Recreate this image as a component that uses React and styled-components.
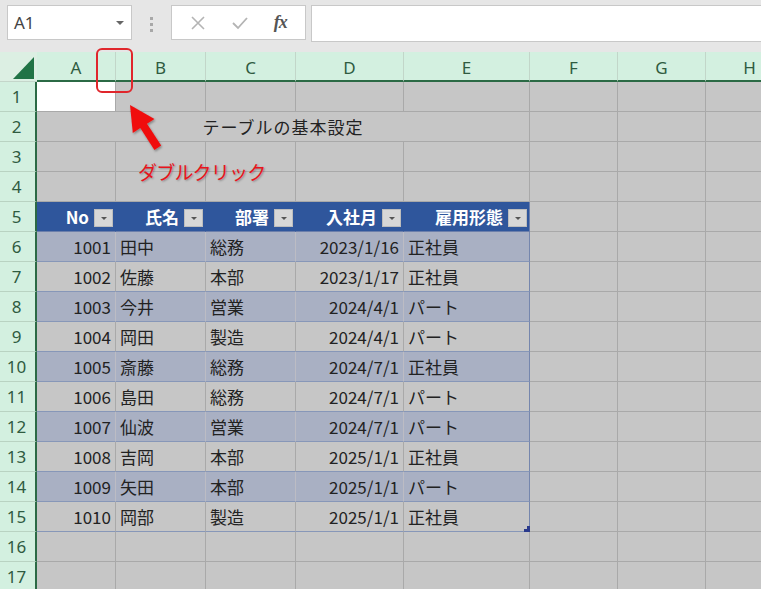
import styled, { createGlobalStyle } from 'styled-components';

const GlobalStyle = createGlobalStyle`
  html, body {
    margin: 0;
    padding: 0;
    background: #e6e6e6;
    overflow: hidden;
  }
`;

const jp = `"Noto Sans CJK JP", "Noto Sans", sans-serif`;

const Page = styled.div`
  position: relative;
  width: 761px;
  height: 589px;
  overflow: hidden;
  background: #e6e6e6;
  font-family: ${jp};
`;

const Toolbar = styled.div`
  display: flex;
  align-items: flex-start;
  height: 52px;
  padding: 5px 0 0 7px;
  box-sizing: border-box;
`;

const NameBox = styled.div`
  display: flex;
  align-items: center;
  justify-content: space-between;
  width: 125px;
  height: 35px;
  box-sizing: border-box;
  padding: 0 7px 0 6px;
  background: #fff;
  border: 1px solid #c8c8c8;
  font-family: "Noto Sans", sans-serif;
  font-size: 17px;
  color: #444;
`;

const Caret = styled.span`
  width: 0;
  height: 0;
  border-left: 4px solid transparent;
  border-right: 4px solid transparent;
  border-top: 4px solid #666;
`;

const Grip = styled.div`
  display: flex;
  flex-direction: column;
  align-items: center;
  gap: 3px;
  width: 39px;
  padding-top: 12px;
`;

const Dot = styled.span`
  width: 3px;
  height: 3px;
  background: #a8a8a8;
`;

const FxBox = styled.div`
  display: flex;
  align-items: center;
  justify-content: space-around;
  width: 135px;
  height: 35px;
  box-sizing: border-box;
  padding: 0 6px;
  background: #fff;
  border: 1px solid #c8c8c8;
`;

const Fx = styled.span`
  font-family: "Liberation Serif", serif;
  font-style: italic;
  font-weight: bold;
  font-size: 18px;
  color: #555;
  letter-spacing: -1px;
`;

const FormulaInput = styled.div`
  flex: 1;
  height: 35px;
  margin-left: 5px;
  background: #fff;
  border: 1px solid #c8c8c8;
  border-right: none;
`;

const Sheet = styled.div`
  display: grid;
  grid-template-columns: 37px 79px 90px 90px 108px 126px 88px 88px 88px;
  grid-auto-rows: 30px;
`;

const Corner = styled.div`
  position: relative;
  background: #dcefe3;
  border-bottom: 1px solid #c4d6ca;
  box-sizing: border-box;
`;

const CornerTriangle = styled.div`
  position: absolute;
  right: 3px;
  bottom: 2px;
  width: 0;
  height: 0;
  border-left: 21px solid transparent;
  border-bottom: 22px solid #217346;
`;

const ColHeader = styled.div`
  display: flex;
  align-items: center;
  justify-content: center;
  padding-top: 2px;
  box-sizing: border-box;
  background: #d3f0e0;
  border-right: 1px solid #c2d6c9;
  border-bottom: 2px solid #2b6a45;
  font-family: "Noto Sans", sans-serif;
  font-size: 17px;
  color: #2f5b40;
`;

const RowHeader = styled.div`
  display: flex;
  align-items: center;
  justify-content: center;
  padding-right: 2px;
  box-sizing: border-box;
  background: #d3f0e0;
  border-right: 2px solid #2b6a45;
  border-bottom: 1px solid #b9d3c2;
  font-family: "Noto Sans", sans-serif;
  font-size: 17px;
  color: #2f5b40;
`;

const Cell = styled.div`
  display: flex;
  align-items: center;
  box-sizing: border-box;
  padding: 0 4px;
  background: ${(p) => (p.$active ? '#fff' : '#c6c6c6')};
  border-right: 1px solid #a9a9a9;
  border-bottom: 1px solid #a9a9a9;
  font-size: 17px;
  color: #222;
`;

const TitleCell = styled(Cell)`
  grid-column: span 5;
  justify-content: center;
  letter-spacing: 1px;
`;

const HeadCell = styled.div`
  display: flex;
  align-items: center;
  justify-content: flex-end;
  gap: 5px;
  box-sizing: border-box;
  padding-right: 2px;
  background: #2f569c;
  border-right: 1px solid ${(p) => (p.$last ? '#6c7fab' : '#2f569c')};
  border-bottom: 1px solid #6c7fab;
  color: #fff;
  font-weight: bold;
  font-size: 17px;
`;

const FilterButton = styled.span`
  display: flex;
  align-items: center;
  justify-content: center;
  width: 19px;
  height: 18px;
  box-sizing: border-box;
  background: #d7d7d7;
  border: 1px solid #bdbdbd;
  margin-top: 2px;

  &::after {
    content: '';
    border-left: 3px solid transparent;
    border-right: 3px solid transparent;
    border-top: 3px solid #555;
    margin-top: 2px;
  }
`;

const DataCell = styled.div`
  position: relative;
  display: flex;
  align-items: center;
  justify-content: ${(p) => (p.$right ? 'flex-end' : 'flex-start')};
  box-sizing: border-box;
  padding: 0 4px;
  background: ${(p) => (p.$band ? '#a9b0c3' : '#c6c6c6')};
  border-right: 1px solid ${(p) => (p.$last ? '#7586ad' : p.$band ? '#bcbcc4' : '#a9a9a9')};
  border-bottom: 1px solid #8797b8;
  font-size: 17px;
  color: #222;
`;

const ResizeHandle = styled.span`
  position: absolute;
  right: -1px;
  bottom: -1px;
  width: 6px;
  height: 6px;
  background: #2a3a8c;
  clip-path: polygon(100% 0, 100% 100%, 0 100%, 0 50%, 50% 50%, 50% 0);
`;

const Highlight = styled.div`
  position: absolute;
  left: 96px;
  top: 48px;
  width: 37px;
  height: 45px;
  box-sizing: border-box;
  border: 2px solid #e0262c;
  border-radius: 6px;
`;

const Arrow = styled.svg`
  position: absolute;
  left: 120px;
  top: 100px;
  overflow: visible;
`;

const Callout = styled.div`
  position: absolute;
  left: 138px;
  top: 158px;
  font-size: 19px;
  color: #e8141c;
  letter-spacing: -0.8px;
  text-shadow: 1px 1px 2px rgba(0, 0, 0, 0.3);
`;

const columns = ['A', 'B', 'C', 'D', 'E', 'F', 'G', 'H'];

const rows = [
  ['1001', '田中', '総務', '2023/1/16', '正社員'],
  ['1002', '佐藤', '本部', '2023/1/17', '正社員'],
  ['1003', '今井', '営業', '2024/4/1', 'パート'],
  ['1004', '岡田', '製造', '2024/4/1', 'パート'],
  ['1005', '斎藤', '総務', '2024/7/1', '正社員'],
  ['1006', '島田', '総務', '2024/7/1', 'パート'],
  ['1007', '仙波', '営業', '2024/7/1', 'パート'],
  ['1008', '吉岡', '本部', '2025/1/1', '正社員'],
  ['1009', '矢田', '本部', '2025/1/1', 'パート'],
  ['1010', '岡部', '製造', '2025/1/1', '正社員'],
];

const headers = ['No', '氏名', '部署', '入社月', '雇用形態'];

const emptyCells = (n, key) =>
  Array.from({ length: n }, (_, i) => <Cell key={`${key}-${i}`} />);

export default function App() {
  return (
    <Page>
      <GlobalStyle />
      <Toolbar>
        <NameBox>
          A1
          <Caret />
        </NameBox>
        <Grip>
          <Dot />
          <Dot />
          <Dot />
        </Grip>
        <FxBox>
          <svg width="16" height="16" viewBox="0 0 16 16">
            <path d="M2 2 L14 14 M14 2 L2 14" stroke="#b4b4b4" strokeWidth="1.6" fill="none" />
          </svg>
          <svg width="18" height="16" viewBox="0 0 18 16">
            <path d="M2 8 L7 13 L16 3" stroke="#b4b4b4" strokeWidth="1.8" fill="none" />
          </svg>
          <Fx>fx</Fx>
        </FxBox>
        <FormulaInput />
      </Toolbar>

      <Sheet>
        <Corner>
          <CornerTriangle />
        </Corner>
        {columns.map((c) => (
          <ColHeader key={c}>{c}</ColHeader>
        ))}

        <RowHeader>1</RowHeader>
        <Cell $active />
        {emptyCells(7, 'r1')}

        <RowHeader>2</RowHeader>
        <TitleCell>テーブルの基本設定</TitleCell>
        {emptyCells(3, 'r2')}

        <RowHeader>3</RowHeader>
        {emptyCells(8, 'r3')}

        <RowHeader>4</RowHeader>
        {emptyCells(8, 'r4')}

        <RowHeader>5</RowHeader>
        {headers.map((h, i) => (
          <HeadCell key={h} $last={i === headers.length - 1}>
            {h}
            <FilterButton />
          </HeadCell>
        ))}
        {emptyCells(3, 'r5')}

        {rows.map((row, r) => (
          <Row key={row[0]} index={r} row={row} />
        ))}

        <RowHeader>16</RowHeader>
        {emptyCells(8, 'r16')}
        <RowHeader>17</RowHeader>
        {emptyCells(8, 'r17')}
      </Sheet>

      <Highlight />
      <Arrow width="50" height="55" viewBox="120 100 50 55">
        <defs>
          <filter id="shadow" x="-30%" y="-30%" width="160%" height="160%">
            <feDropShadow dx="1" dy="1.5" stdDeviation="1.2" floodColor="#000" floodOpacity="0.35" />
          </filter>
        </defs>
        <polygon
          points="130,105 154.5,118.9 147,123.8 161.2,145.5 154.4,149.9 140.3,128.1 132.8,133"
          fill="#f01010"
          filter="url(#shadow)"
        />
      </Arrow>
      <Callout>ダブルクリック</Callout>
    </Page>
  );
}

function Row({ index, row }) {
  const band = index % 2 === 0;
  const isLast = index === rows.length - 1;
  return (
    <>
      <RowHeader>{index + 6}</RowHeader>
      <DataCell $band={band} $right>{row[0]}</DataCell>
      <DataCell $band={band}>{row[1]}</DataCell>
      <DataCell $band={band}>{row[2]}</DataCell>
      <DataCell $band={band} $right>{row[3]}</DataCell>
      <DataCell $band={band} $last>
        {row[4]}
        {isLast && <ResizeHandle />}
      </DataCell>
      {emptyCells(3, `d${index}`)}
    </>
  );
}
